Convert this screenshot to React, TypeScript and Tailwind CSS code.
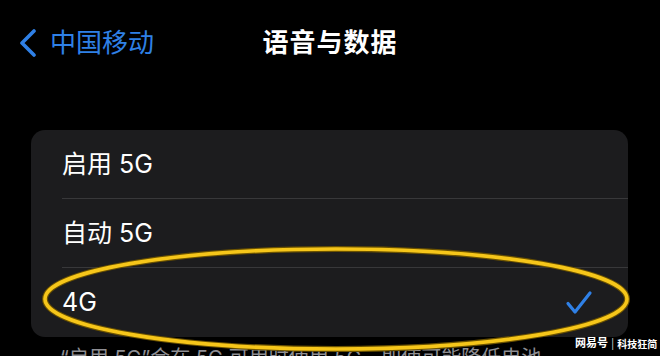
import React from "react";

const FONT = { fontFamily: '"Inter", "Noto Sans CJK SC", sans-serif' };

const rows = [
  { label: "启用 5G", checked: false },
  { label: "自动 5G", checked: false },
  { label: "4G", checked: true },
];

function Chevron() {
  return (
    <svg width="18" height="28" viewBox="0 0 18 28" fill="none">
      <path
        d="M15 2 L3 14 L15 26"
        stroke="#2f80e6"
        strokeWidth="3.6"
        strokeLinecap="round"
        strokeLinejoin="round"
      />
    </svg>
  );
}

function Check() {
  return (
    <svg width="28" height="26" viewBox="0 0 28 26" fill="none">
      <path
        d="M3 13.5 L10 22 L25 3"
        stroke="#2f80e6"
        strokeWidth="3.2"
        strokeLinecap="round"
        strokeLinejoin="round"
      />
    </svg>
  );
}

export default function App() {
  return (
    <div
      className="relative h-[356px] w-[660px] overflow-hidden bg-black text-white"
      style={FONT}
    >
      {/* nav bar */}
      <header className="grid h-[86px] grid-cols-[1fr_auto_1fr] items-center">
        <div className="flex items-center gap-[13px] pl-[19px]">
          <Chevron />
          <span className="text-[26px] leading-none text-[#2f80e6]">中国移动</span>
        </div>
        <h1 className="text-[26px] font-semibold leading-none tracking-[1px]">语音与数据</h1>
        <div />
      </header>

      {/* options card */}
      <section className="ml-[31px] mt-[44px] w-[597px] overflow-hidden rounded-[14px] bg-[#1c1c1e]">
        {rows.map((row, i) => (
          <div key={row.label} className="pl-[31px]">
            <div
              className={
                "flex h-[69px] items-center justify-between pr-[35px] " +
                (i < rows.length - 1 ? "border-b border-[#38383a]" : "")
              }
            >
              <span className="text-[25px] leading-none">{row.label}</span>
              {row.checked && <Check />}
            </div>
          </div>
        ))}
      </section>

      {/* footnote, cut off by the frame */}
      <p className="ml-[60px] mt-[11px] whitespace-nowrap text-[20px] leading-none text-[#8e8e93]">
        “启用 5G”会在 5G 可用时使用 5G，即使可能降低电池
      </p>

      {/* hand-drawn highlight */}
      <svg
        className="pointer-events-none absolute left-0 top-0"
        width="660"
        height="356"
        viewBox="0 0 660 356"
      >
        <ellipse
          cx="336"
          cy="299"
          rx="291"
          ry="50"
          fill="none"
          stroke="#6b5200"
          strokeWidth="6"
        />
        <ellipse
          cx="336"
          cy="299"
          rx="291"
          ry="50"
          fill="none"
          stroke="#f6c61a"
          strokeWidth="3.6"
        />
      </svg>

      {/* watermark */}
      <div className="absolute left-[575px] top-[338px] flex items-center gap-[3px] whitespace-nowrap text-[10px] font-bold leading-none text-white">
        <span className="text-[11px]">网易号</span>
        <span className="font-normal text-[#cfcfcf]">|</span>
        <span>科技狂简</span>
      </div>
    </div>
  );
}
